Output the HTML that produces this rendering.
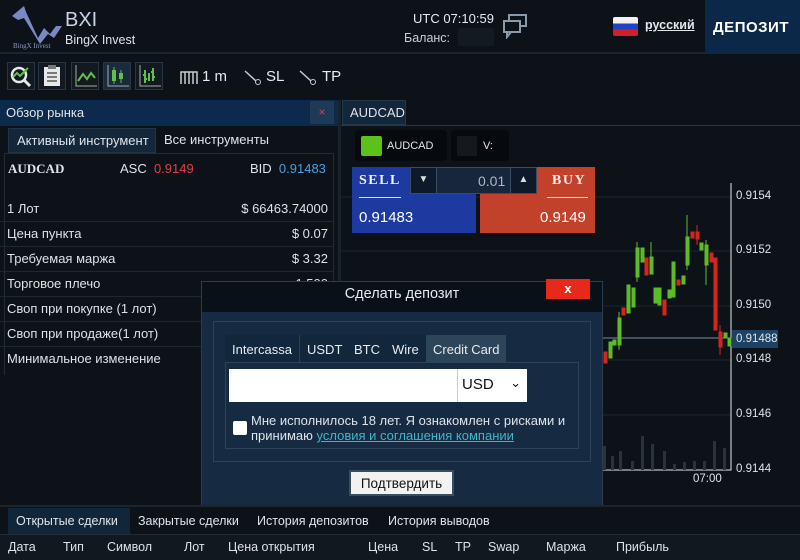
<!DOCTYPE html>
<html><head><meta charset="utf-8">
<style>
*{box-sizing:border-box;margin:0;padding:0}
body{width:800px;height:560px;overflow:hidden;background:#0d1219;font-family:"Liberation Sans",sans-serif;color:#dfe4ea;position:relative;font-size:13px}
.a{position:absolute}
.ib{position:absolute;top:62px;width:28px;height:28px;border:1px solid #2a3642;background:#121920}
.row{position:absolute;left:0;width:334px;height:25px;border-bottom:1px solid #1f2832;font-size:13px;color:#dde2e8}
.row span{position:absolute;right:6px;top:4px}
.row b{position:absolute;left:7px;top:4px;font-weight:normal}
.tab{position:absolute;top:335px;height:27px;background:#13273c;border-right:1px solid #2a4056;font-size:13px;padding:7px 7px 0;color:#e7ebef}
.th{position:absolute;top:540px;font-size:12.5px;color:#dde2e8}
</style></head><body>
<div class="a" style="left:0;top:0;width:800px;height:54px;background:#0d1219;border-bottom:2px solid #1c242d"></div>
<svg class="a" style="left:10px;top:4px" width="56" height="46" viewBox="0 0 56 46">
<polygon points="2,12 14,2 16,8 28,34 34,24 40,30 46,22 52,22 44,34 38,30 30,40 14,14 8,16" fill="#7a88c4"/>
<text x="3" y="44" font-size="7" fill="#8a96c6" font-family="Liberation Serif">BingX Invest</text>
</svg>
<div class="a" style="left:65px;top:9px;font-size:20px;color:#c9d3ea">BXI</div>
<div class="a" style="left:65px;top:33px;font-size:12.5px;color:#dde3ea">BingX Invest</div>
<div class="a" style="left:413px;top:11px;font-size:13px;color:#e6eaee">UTC 07:10:59</div>
<div class="a" style="left:404px;top:31px;font-size:12.5px;color:#c9cfd6">Баланс:</div>
<div class="a" style="left:458px;top:28px;width:36px;height:18px;background:#131a21"></div>
<svg class="a" style="left:502px;top:13px" width="26" height="26" viewBox="0 0 26 26" fill="none" stroke="#8a9aa8" stroke-width="2"><rect x="7" y="2" width="17" height="11"/><rect x="2" y="8" width="16" height="11" fill="#0d1219"/><path d="M5 19v5l4-5"/></svg>
<div class="a" style="left:613px;top:17px;width:25px;height:19px;border-radius:2px;background:linear-gradient(#f2f2f2 0 33%,#2244c4 33% 66%,#d2202a 66%)"></div>
<div class="a" style="left:645px;top:18px;font-size:12.5px;font-weight:bold;color:#e3e7ea;text-decoration:underline">русский</div>
<div class="a" style="left:705px;top:0;width:95px;height:54px;background:#0c2848;color:#fff;font-weight:bold;font-size:15px;letter-spacing:.5px;padding:19px 0 0 8px">ДЕПОЗИТ</div>
<div class="ib" style="left:7px"><svg width="26" height="26"><circle cx="11" cy="12" r="7" fill="none" stroke="#e8e8e8" stroke-width="2.5"/><path d="M16 17l6 6" stroke="#e8e8e8" stroke-width="3"/><path d="M5 14l4-4 3 3 8-8" stroke="#5fc04a" stroke-width="2" fill="none"/></svg></div>
<div class="ib" style="left:38px"><svg width="26" height="26"><rect x="5" y="4" width="16" height="19" fill="#e8e8e8"/><rect x="9" y="2" width="8" height="4" fill="#777"/><path d="M8 10h10M8 14h10M8 18h10" stroke="#555" stroke-width="1.5"/></svg></div>
<div class="ib" style="left:71px"><svg width="26" height="26"><path d="M4 2v21h21" stroke="#aaa" fill="none"/><path d="M6 18l5-7 4 5 4-6 4 5" stroke="#5fc04a" stroke-width="2" fill="none"/></svg></div>
<div class="ib" style="left:103px;background:#1a2b3d"><svg width="26" height="26"><path d="M4 2v21h21" stroke="#aaa" fill="none"/><rect x="8" y="7" width="4" height="11" fill="#5fc04a"/><path d="M10 4v17M17 7v13" stroke="#5fc04a"/><rect x="15" y="10" width="4" height="6" fill="#5fc04a"/></svg></div>
<div class="ib" style="left:135px"><svg width="26" height="26"><path d="M4 2v21h21" stroke="#aaa" fill="none"/><path d="M9 7v13M9 12h-2M9 16h2M17 5v13M17 9h-2M17 14h2M13 10v8" stroke="#5fc04a" stroke-width="2"/></svg></div>
<svg class="a" style="left:180px;top:69px" width="18" height="16"><path d="M1 15V3h16v12M5 3v12M9 3v12M13 3v12" stroke="#ccc" stroke-width="1.5" fill="none"/></svg>
<div class="a" style="left:202px;top:68px;font-size:15px;color:#e8ecef">1 m</div>
<svg class="a" style="left:244px;top:70px" width="18" height="16"><path d="M1 1l11 10" stroke="#ccc" stroke-width="1.5"/><circle cx="14" cy="12" r="2.5" stroke="#ccc" fill="none"/></svg>
<div class="a" style="left:266px;top:68px;font-size:15px;color:#e8ecef">SL</div>
<svg class="a" style="left:299px;top:70px" width="18" height="16"><path d="M1 1l11 10" stroke="#ccc" stroke-width="1.5"/><circle cx="14" cy="12" r="2.5" stroke="#ccc" fill="none"/></svg>
<div class="a" style="left:322px;top:68px;font-size:15px;color:#e8ecef">TP</div>
<div class="a" style="left:0;top:100px;width:338px;height:26px;background:#0b2a4c"></div>
<div class="a" style="left:6px;top:105px;font-size:13px">Обзор рынка</div>
<div class="a" style="left:310px;top:101px;width:24px;height:23px;background:#1e3a56;color:#d0443c;text-align:center;font-size:12px;padding-top:4px">×</div>
<div class="a" style="left:338px;top:100px;width:3px;height:405px;background:#1a222b"></div>
<div class="a" style="left:8px;top:128px;width:148px;height:25px;background:#13263a;border:1px solid #243447;font-size:13px;padding:4px 0 0 8px">Активный инструмент</div>
<div class="a" style="left:164px;top:132px;font-size:13px">Все инструменты</div>
<div class="a" style="left:4px;top:153px;width:330px;height:222px;border:1px solid #222c36;border-bottom:none"></div>
<div class="a" style="left:8px;top:161px;font-family:'Liberation Serif',serif;font-weight:bold;font-size:13px">AUDCAD</div>
<div class="a" style="left:120px;top:161px;font-size:13px">ASC <span style="color:#e04040">&nbsp;0.9149</span></div>
<div class="a" style="left:250px;top:161px;font-size:13px">BID <span style="color:#4a9ee0">&nbsp;0.91483</span></div>
<div class="row" style="top:197px"><b>1 Лот</b><span>$ 66463.74000</span></div>
<div class="row" style="top:222px"><b>Цена пункта</b><span>$ 0.07</span></div>
<div class="row" style="top:247px"><b>Требуемая маржа</b><span>$ 3.32</span></div>
<div class="row" style="top:272px"><b>Торговое плечо</b><span>1:500</span></div>
<div class="row" style="top:297px"><b>Своп при покупке (1 лот)</b></div>
<div class="row" style="top:322px"><b>Своп при продаже(1 лот)</b></div>
<div class="row" style="top:347px;border:none"><b>Минимальное изменение</b></div>
<div class="a" style="left:342px;top:100px;width:64px;height:25px;background:#13273b;border:1px solid #24384c;font-size:13px;padding:4px 0 0 7px">AUDCAD</div>
<div class="a" style="left:341px;top:125px;width:459px;height:1px;background:#2a3846"></div>
<svg class="a" style="left:341px;top:126px" width="459" height="380">
<g stroke="#1c2530" stroke-width="1"><path d="M0 71H390M0 125H390M0 180H390M0 234H390M0 289H390"/></g>
<path d="M390 57V344H0" stroke="#e8e8e8" fill="none"/>
<path d="M0 212H390" stroke="#7890a4"/>
<g fill="#2a323c"><rect x="262" y="320" width="3" height="24"/><rect x="270" y="330" width="3" height="14"/><rect x="278" y="325" width="3" height="19"/><rect x="290" y="335" width="3" height="9"/><rect x="300" y="310" width="3" height="34"/><rect x="310" y="318" width="3" height="26"/><rect x="322" y="325" width="3" height="19"/><rect x="332" y="338" width="3" height="6"/><rect x="342" y="336" width="3" height="8"/><rect x="352" y="335" width="3" height="9"/><rect x="362" y="335" width="3" height="9"/><rect x="372" y="315" width="3" height="29"/><rect x="382" y="322" width="3" height="22"/></g>
</svg>
<svg class="a" style="left:0;top:0" width="800" height="560">
<g fill="#5dbb2a" stroke="#5dbb2a">
<rect x="609" y="342" width="3" height="16"/><rect x="613" y="340" width="3" height="5"/><rect x="618" y="318" width="3" height="27"/><line x1="619" y1="312" x2="619" y2="350"/><rect x="627" y="285" width="3" height="28"/><rect x="632" y="288" width="3" height="19"/><rect x="636" y="248" width="3" height="29"/><line x1="637" y1="242" x2="637" y2="282"/><rect x="641" y="248" width="3" height="14"/><rect x="650" y="257" width="3" height="17"/><line x1="651" y1="242" x2="651" y2="274"/><rect x="654" y="288" width="3" height="15"/><rect x="658" y="288" width="3" height="17"/><rect x="668" y="290" width="3" height="8"/><rect x="672" y="262" width="3" height="35"/><rect x="682" y="276" width="3" height="8"/><rect x="686" y="237" width="3" height="28"/><line x1="687" y1="215" x2="687" y2="270"/><rect x="700" y="243" width="3" height="7"/><rect x="705" y="245" width="3" height="20"/><line x1="706" y1="240" x2="706" y2="285"/><rect x="724" y="333" width="3" height="5"/><rect x="728" y="338" width="3" height="8"/>
</g>
<g fill="#d6241e" stroke="#d6241e">
<rect x="604" y="352" width="3" height="11"/><rect x="622" y="308" width="3" height="7"/><rect x="645" y="258" width="3" height="17"/><rect x="663" y="300" width="3" height="15"/><rect x="677" y="280" width="3" height="5"/><rect x="691" y="232" width="3" height="6"/><rect x="696" y="232" width="3" height="7"/><line x1="697" y1="225" x2="697" y2="245"/><rect x="710" y="253" width="3" height="9"/><rect x="714" y="258" width="3" height="72"/><rect x="719" y="332" width="3" height="15"/><line x1="720" y1="325" x2="720" y2="355"/>
</g>
</svg>
<div class="a" style="left:736px;top:190px;font-size:11.5px">0.9154</div>
<div class="a" style="left:736px;top:244px;font-size:11.5px">0.9152</div>
<div class="a" style="left:736px;top:299px;font-size:11.5px">0.9150</div>
<div class="a" style="left:732px;top:330px;width:46px;height:18px;background:#1e4264;font-size:11.5px;padding:3px 0 0 4px">0.91488</div>
<div class="a" style="left:736px;top:353px;font-size:11.5px">0.9148</div>
<div class="a" style="left:736px;top:408px;font-size:11.5px">0.9146</div>
<div class="a" style="left:736px;top:463px;font-size:11.5px">0.9144</div>
<div class="a" style="left:693px;top:473px;font-size:11.5px">07:00</div>
<div class="a" style="left:355px;top:130px;width:92px;height:31px;background:#06090d;border-radius:4px"></div>
<div class="a" style="left:361px;top:136px;width:21px;height:20px;background:#5cc21a;border-radius:2px"></div>
<div class="a" style="left:387px;top:140px;font-size:11px">AUDCAD</div>
<div class="a" style="left:451px;top:130px;width:58px;height:31px;background:#06090d;border-radius:4px"></div>
<div class="a" style="left:457px;top:136px;width:20px;height:20px;background:#15191e;border-radius:2px"></div>
<div class="a" style="left:483px;top:140px;font-size:11px">V:</div>
<div class="a" style="left:352px;top:167px;width:124px;height:66px;background:#1c3aa0"></div>
<div class="a" style="left:480px;top:167px;width:115px;height:66px;background:#c2412b"></div>
<div class="a" style="left:359px;top:173px;font-family:'Liberation Serif',serif;font-weight:bold;font-size:14px;letter-spacing:1.5px;color:#f0f0f8">SELL</div>
<div class="a" style="left:359px;top:197px;width:42px;height:1px;background:#e0e0f0"></div>
<div class="a" style="left:359px;top:209px;font-size:15px;color:#fff">0.91483</div>
<div class="a" style="left:552px;top:173px;font-family:'Liberation Serif',serif;font-weight:bold;font-size:14px;letter-spacing:1.5px;color:#f8eeea">BUY</div>
<div class="a" style="left:547px;top:197px;width:41px;height:1px;background:#f0e0e0"></div>
<div class="a" style="left:540px;top:209px;font-size:15px;color:#fff">0.9149</div>
<div class="a" style="left:410px;top:167px;width:127px;height:27px;background:#17263a;border:1px solid #3a4e62"></div>
<div class="a" style="left:411px;top:168px;width:26px;height:25px;background:#0e1a2c;border-right:1px solid #3a4e62;color:#ddd;font-size:10px;text-align:center;padding-top:6px">▼</div>
<div class="a" style="left:510px;top:168px;width:26px;height:25px;background:#0e1a2c;border-left:1px solid #3a4e62;color:#ddd;font-size:10px;text-align:center;padding-top:6px">▲</div>
<div class="a" style="left:478px;top:173px;font-size:14px;color:#aeb8c4">0.01</div>
<div class="a" style="left:201px;top:281px;width:402px;height:225px;background:#162b42;border:1px solid #2a3e52"></div>
<div class="a" style="left:202px;top:282px;width:400px;height:30px;background:#0a1018"></div>
<div class="a" style="left:202px;top:286px;width:400px;text-align:center;font-size:14.5px;color:#e6eaee">Сделать депозит</div>
<div class="a" style="left:546px;top:279px;width:44px;height:20px;background:#e8291a;color:#fff;font-weight:bold;text-align:center;font-size:13px;padding-top:2px">x</div>
<div class="a" style="left:213px;top:321px;width:378px;height:141px;border:1px solid #2c4358"></div>
<div class="a" style="left:225px;top:362px;width:354px;height:87px;border:1px solid #2c4358"></div>
<div class="tab" style="left:225px">Intercassa</div>
<div class="tab" style="left:300px">USDT</div>
<div class="tab" style="left:347px">BTC</div>
<div class="tab" style="left:385px">Wire</div>
<div class="tab" style="left:426px;background:#2d4558;border:none">Credit Card</div>
<div class="a" style="left:229px;top:369px;width:228px;height:33px;background:#fff"></div>
<div class="a" style="left:457px;top:369px;width:70px;height:33px;background:#fff;border-left:1px solid #ccc;color:#111;font-size:15px;padding:7px 0 0 4px">USD <span style="position:absolute;right:6px;top:6px;font-size:13px">⌄</span></div>
<div class="a" style="left:233px;top:421px;width:14px;height:14px;background:#fff;border-radius:2px"></div>
<div class="a" style="left:251px;top:413px;font-size:13px;line-height:15px;color:#dde3ea">Мне исполнилось 18 лет. Я ознакомлен с рисками и<br>принимаю <span style="color:#3fb6c6;text-decoration:underline">условия и соглашения компании</span></div>
<div class="a" style="left:349px;top:470px;width:105px;height:26px;background:#f2f2f2;border:2px solid #3b4c5c;color:#111;font-size:13.5px;text-align:center;padding-top:4px">Подтвердить</div>
<div class="a" style="left:0;top:505px;width:800px;height:55px;background:#0d1219;border-top:2px solid #1c242d"></div>
<div class="a" style="left:8px;top:508px;height:26px;background:#12263a;width:122px"></div>
<div class="a" style="left:16px;top:514px;font-size:12.5px">Открытые сделки</div>
<div class="a" style="left:138px;top:514px;font-size:12.5px">Закрытые сделки</div>
<div class="a" style="left:257px;top:514px;font-size:12.5px">История депозитов</div>
<div class="a" style="left:388px;top:514px;font-size:12.5px">История выводов</div>
<div class="a" style="left:0;top:534px;width:800px;height:26px;background:#111820;border-top:1px solid #222c36"></div>
<div class="th" style="left:8px">Дата</div><div class="th" style="left:63px">Тип</div><div class="th" style="left:107px">Символ</div><div class="th" style="left:184px">Лот</div><div class="th" style="left:228px">Цена открытия</div><div class="th" style="left:368px">Цена</div><div class="th" style="left:422px">SL</div><div class="th" style="left:455px">TP</div><div class="th" style="left:488px">Swap</div><div class="th" style="left:546px">Маржа</div><div class="th" style="left:616px">Прибыль</div>
</body></html>
